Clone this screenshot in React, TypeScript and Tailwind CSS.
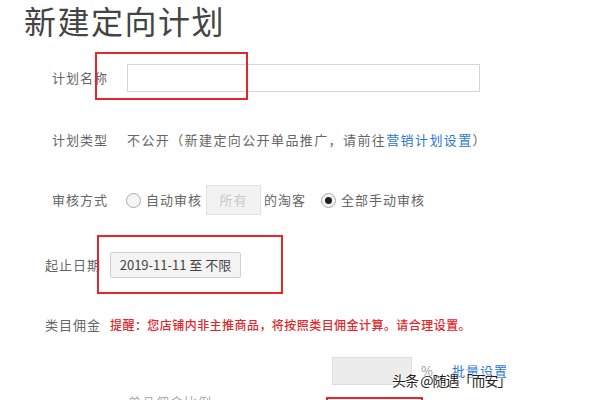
import React from 'react';

const font = { fontFamily: '"Noto Sans CJK SC", "Noto Sans", sans-serif' };

const Label = ({ children, indent = 'pl-[52px] w-[127px]' }: { children: React.ReactNode; indent?: string }) => (
  <div className={`${indent} shrink-0 text-[13px] text-[#666] tracking-[1px]`}>{children}</div>
);

const Radio = ({ checked }: { checked?: boolean }) => (
  <span className="w-[15px] h-[15px] rounded-full border border-[#aaa] bg-[#f4f4f4] flex items-center justify-center shrink-0">
    {checked && <span className="w-[7px] h-[7px] rounded-full bg-[#222]" />}
  </span>
);

export default function App() {
  return (
    <div className="relative w-[600px] h-[400px] overflow-hidden bg-white" style={font}>
      {/* Title */}
      <h1 className="leading-[40px] pl-[24px] text-[32px] text-[#444] tracking-[1.5px]">新建定向计划</h1>

      {/* 计划名称 */}
      <div className="mt-[24px] h-[28px] flex items-center">
        <Label>计划名称</Label>
        <div className="w-[353px] h-[28px] border border-[#d6d6d6] bg-white" />
      </div>

      {/* 计划类型 */}
      <div className="mt-[34px] h-[28px] flex items-center">
        <Label>计划类型</Label>
        <div className="text-[13px] text-[#666] tracking-[1.4px]">
          不公开（新建定向公开单品推广，请前往<span className="text-[#2a78d2]">营销计划设置</span>）
        </div>
      </div>

      {/* 审核方式 */}
      <div className="mt-[31px] h-[30px] flex items-center">
        <Label indent="pl-[52px] w-[126px]">审核方式</Label>
        <Radio />
        <span className="ml-[5px] text-[13px] text-[#666] tracking-[1px]">自动审核</span>
        <div className="ml-[4px] w-[55px] h-[30px] border border-[#e2e2e2] bg-[#f2f2f2] text-[13px] text-[#c8c8c8] flex items-center justify-center tracking-[1px]">
          所有
        </div>
        <span className="ml-[3px] text-[13px] text-[#666] tracking-[1px]">的淘客</span>
        <span className="ml-[15px]"><Radio checked /></span>
        <span className="ml-[5px] text-[13px] text-[#666] tracking-[1px]">全部手动审核</span>
      </div>

      {/* 起止日期 */}
      <div className="mt-[37px] h-[26px] flex items-center">
        <Label indent="pl-[45px] w-[110px]">起止日期</Label>
        <div className="w-[131px] h-[26px] border border-[#d0d0d0] bg-[#f3f3f3] rounded-[2px] text-[13px] text-[#444] flex items-center justify-center">
          2019-11-11 至 不限
        </div>
      </div>

      {/* 类目佣金 */}
      <div className="mt-[37px] h-[20px] flex items-center">
        <Label indent="pl-[45px] w-[110px]">类目佣金</Label>
        <div className="text-[12px] font-medium text-[#e4262b] tracking-[0.45px]">
          提醒：您店铺内非主推商品，将按照类目佣金计算。请合理设置。
        </div>
      </div>

      {/* 佣金比例 */}
      <div className="mt-[22px] h-[28px] flex items-center pl-[332px]">
        <div className="w-[80px] h-[28px] border border-[#dcdcdc] bg-[#ececec]" />
        <span className="ml-[9px] text-[13px] text-[#999]">%</span>
        <span className="ml-[19px] text-[13px] text-[#2a78d2] tracking-[1px]">批量设置</span>
      </div>

      {/* cut-off row */}
      <div className="mt-[7px] pl-[128px] text-[13px] text-[#aaa] tracking-[1px]">单品佣金比例</div>

      {/* annotation boxes */}
      <div className="absolute left-[95px] top-[52px] w-[153px] h-[48px] border-2 border-[#e8262a]" />
      <div className="absolute left-[97px] top-[235px] w-[186px] h-[59px] border-2 border-[#e8262a]" />
      <div className="absolute left-[326px] top-[397px] w-[97px] h-[20px] border-2 border-[#e8262a]" />

      {/* watermark */}
      <div
        className="absolute left-[392px] top-[370px] text-[14px] text-[#222] whitespace-nowrap tracking-[-1px]"
        style={{ textShadow: '0 0 2px #fff, 0 0 2px #fff, 0 0 3px #fff' }}
      >
        头条 @随遇「而安」
      </div>
    </div>
  );
}
